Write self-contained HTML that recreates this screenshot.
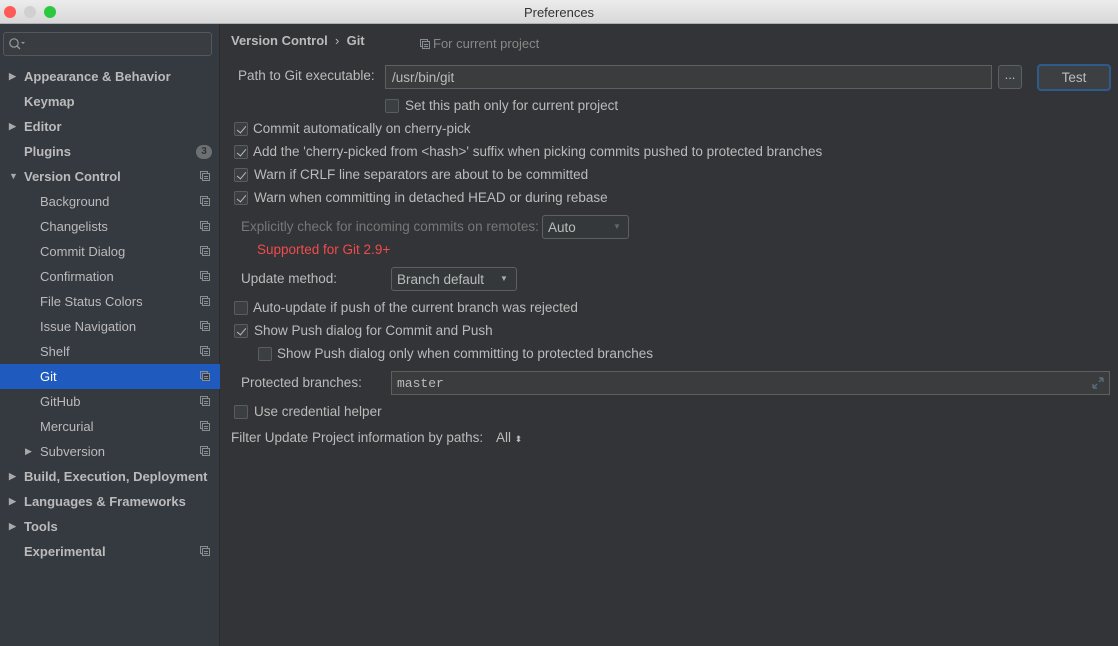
<!DOCTYPE html>
<html><head><style>
*{margin:0;padding:0;box-sizing:border-box}
body{width:1118px;height:646px;overflow:hidden;background:#323437;font-family:"Liberation Sans",sans-serif;font-size:13px;color:#bbbbbb;position:relative}
.a{position:absolute;white-space:nowrap}
.r{font-size:13.5px}
#title{left:0;top:0;width:1118px;height:24px;background:linear-gradient(#ececec,#d8d8d8);border-bottom:1px solid #b0b0b0;text-align:center;line-height:25px;color:#333;font-size:13px}
.dot{position:absolute;top:6px;width:12px;height:12px;border-radius:50%}
#side{left:0;top:24px;width:220px;height:622px;background:#353940;border-right:1px solid #2a2b2d}
.si{position:absolute;left:0;width:220px;height:25px;line-height:25px;color:#bbb}
.b{font-weight:bold}
.tri{position:absolute;left:9px;font-size:9px;color:#aaa}
.cp{position:absolute;left:200px;top:7px;width:10px;height:10px}
.cb{position:absolute;width:14px;height:14px;border:1px solid #5a5d60;border-radius:2px;background:#3c3f41}
.ck::after{content:"";position:absolute;left:4px;top:1px;width:4px;height:8px;border:solid #bbb;border-width:0 1.5px 1.5px 0;transform:rotate(40deg)}
.box{position:absolute;border:1px solid #5e6060;background:#3a3c3e}
</style></head><body>
<div id="title" class="a">Preferences
<div class="dot" style="left:4px;background:#fc5b57"></div>
<div class="dot" style="left:24px;background:#d0d0d0"></div>
<div class="dot" style="left:44px;background:#2bc840"></div>
</div>
<div id="side" class="a">
<div class="a" style="left:3px;top:8px;width:209px;height:24px;border:1px solid #55585b;border-radius:3px;background:#393c40"></div>
<svg class="a" style="left:8px;top:13px" width="18" height="14"><circle cx="6" cy="6" r="4.2" fill="none" stroke="#999" stroke-width="1.2"/><path d="M9 9 L12 12" stroke="#999" stroke-width="1.3"/><path d="M13 5 L17 5 L15 7Z" fill="#999"/></svg>
</div>
<svg width="0" height="0" style="position:absolute"><defs><g id="ci"><rect x="0.5" y="0.5" width="7" height="7" fill="none" stroke="#8a8d90"/><rect x="2.5" y="2.5" width="7" height="7" fill="#353940" stroke="#8a8d90"/><path d="M4 5.5h4M4 7.5h4" stroke="#8a8d90"/></g></defs></svg>
<div class="si b" style="top:64px"><span class="tri">▶</span><span style="margin-left:24px">Appearance &amp; Behavior</span></div>
<div class="si b" style="top:89px"><span style="margin-left:24px">Keymap</span></div>
<div class="si b" style="top:114px"><span class="tri">▶</span><span style="margin-left:24px">Editor</span></div>
<div class="si b" style="top:139px"><span style="margin-left:24px">Plugins</span><span class="a" style="left:196px;top:6px;width:16px;height:14px;border-radius:7px;background:#6c7073;color:#333;font-size:10px;line-height:14px;text-align:center">3</span></div>
<div class="si b" style="top:164px"><span class="tri">▼</span><span style="margin-left:24px">Version Control</span><svg class="cp"><use href="#ci"/></svg></div>
<div class="si" style="top:189px"><span style="margin-left:40px">Background</span><svg class="cp"><use href="#ci"/></svg></div>
<div class="si" style="top:214px"><span style="margin-left:40px">Changelists</span><svg class="cp"><use href="#ci"/></svg></div>
<div class="si" style="top:239px"><span style="margin-left:40px">Commit Dialog</span><svg class="cp"><use href="#ci"/></svg></div>
<div class="si" style="top:264px"><span style="margin-left:40px">Confirmation</span><svg class="cp"><use href="#ci"/></svg></div>
<div class="si" style="top:289px"><span style="margin-left:40px">File Status Colors</span><svg class="cp"><use href="#ci"/></svg></div>
<div class="si" style="top:314px"><span style="margin-left:40px">Issue Navigation</span><svg class="cp"><use href="#ci"/></svg></div>
<div class="si" style="top:339px"><span style="margin-left:40px">Shelf</span><svg class="cp"><use href="#ci"/></svg></div>
<div class="si" style="top:364px;background:#1f5bbf;color:#fff"><span style="margin-left:40px">Git</span><svg class="cp"><use href="#ci"/></svg></div>
<div class="si" style="top:389px"><span style="margin-left:40px">GitHub</span><svg class="cp"><use href="#ci"/></svg></div>
<div class="si" style="top:414px"><span style="margin-left:40px">Mercurial</span><svg class="cp"><use href="#ci"/></svg></div>
<div class="si" style="top:439px"><span class="tri" style="left:25px">▶</span><span style="margin-left:40px">Subversion</span><svg class="cp"><use href="#ci"/></svg></div>
<div class="si b" style="top:464px"><span class="tri">▶</span><span style="margin-left:24px">Build, Execution, Deployment</span></div>
<div class="si b" style="top:489px"><span class="tri">▶</span><span style="margin-left:24px">Languages &amp; Frameworks</span></div>
<div class="si b" style="top:514px"><span class="tri">▶</span><span style="margin-left:24px">Tools</span></div>
<div class="si b" style="top:539px"><span style="margin-left:24px">Experimental</span><svg class="cp"><use href="#ci"/></svg></div>

<div class="a b" style="left:231px;top:33px">Version Control&nbsp;&nbsp;<span style="font-weight:normal">›</span>&nbsp;&nbsp;Git</div>
<svg class="a" style="left:420px;top:39px" width="10" height="10"><use href="#ci"/></svg>
<div class="a" style="left:433px;top:36px;color:#888">For current project</div>

<div class="a r" style="left:238px;top:68px">Path to Git executable:</div>
<div class="box" style="left:385px;top:65px;width:607px;height:24px"><span class="a r" style="left:6px;top:4px">/usr/bin/git</span></div>
<div class="box" style="left:998px;top:65px;width:24px;height:24px;border-radius:3px;background:#3d4043;text-align:center;line-height:18px">...</div>
<div class="a r" style="left:1037px;top:64px;width:74px;height:27px;border:2px solid #2f5b8c;border-radius:4px;background:#3d4043;text-align:center;line-height:23px">Test</div>

<div class="cb" style="left:385px;top:99px"></div><div class="a r" style="left:405px;top:98px">Set this path only for current project</div>
<div class="cb ck" style="left:234px;top:122px"></div><div class="a r" style="left:253px;top:121px">Commit automatically on cherry-pick</div>
<div class="cb ck" style="left:234px;top:145px"></div><div class="a r" style="left:253px;top:144px">Add the 'cherry-picked from &lt;hash&gt;' suffix when picking commits pushed to protected branches</div>
<div class="cb ck" style="left:234px;top:168px"></div><div class="a r" style="left:254px;top:167px">Warn if CRLF line separators are about to be committed</div>
<div class="cb ck" style="left:234px;top:191px"></div><div class="a r" style="left:254px;top:190px">Warn when committing in detached HEAD or during rebase</div>

<div class="a r" style="left:241px;top:219px;color:#777">Explicitly check for incoming commits on remotes:</div>
<div class="box" style="left:542px;top:215px;width:87px;height:24px;border-radius:3px;background:#35383a"><span class="a r" style="left:5px;top:4px">Auto</span><span class="a" style="left:70px;top:6px;font-size:8px;color:#666">▼</span></div>
<div class="a r" style="left:257px;top:242px;color:#f24b4b">Supported for Git 2.9+</div>

<div class="a r" style="left:241px;top:271px">Update method:</div>
<div class="box" style="left:391px;top:267px;width:126px;height:24px;border-radius:3px;background:#35383a"><span class="a r" style="left:5px;top:4px">Branch default</span><span class="a" style="left:108px;top:6px;font-size:8px;color:#aaa">▼</span></div>

<div class="cb" style="left:234px;top:301px"></div><div class="a r" style="left:253px;top:300px">Auto-update if push of the current branch was rejected</div>
<div class="cb ck" style="left:234px;top:324px"></div><div class="a r" style="left:254px;top:323px">Show Push dialog for Commit and Push</div>
<div class="cb" style="left:258px;top:347px"></div><div class="a r" style="left:277px;top:346px">Show Push dialog only when committing to protected branches</div>

<div class="a r" style="left:241px;top:375px">Protected branches:</div>
<div class="box" style="left:391px;top:371px;width:719px;height:24px"><span class="a" style="left:5px;top:4px;font-family:'Liberation Mono',monospace;font-size:13px">master</span>
<svg class="a" style="left:700px;top:5px" width="12" height="12"><path d="M1 11L5 7M1 11V7M1 11H5M11 1L7 5M11 1V5M11 1H7" stroke="#5a6a78" stroke-width="1.4" fill="none"/></svg></div>

<div class="cb" style="left:234px;top:405px"></div><div class="a r" style="left:254px;top:404px">Use credential helper</div>
<div class="a r" style="left:231px;top:430px">Filter Update Project information by paths:</div>
<div class="a r" style="left:496px;top:430px">All <span style="font-size:9px">⬍</span></div>
</body></html>
